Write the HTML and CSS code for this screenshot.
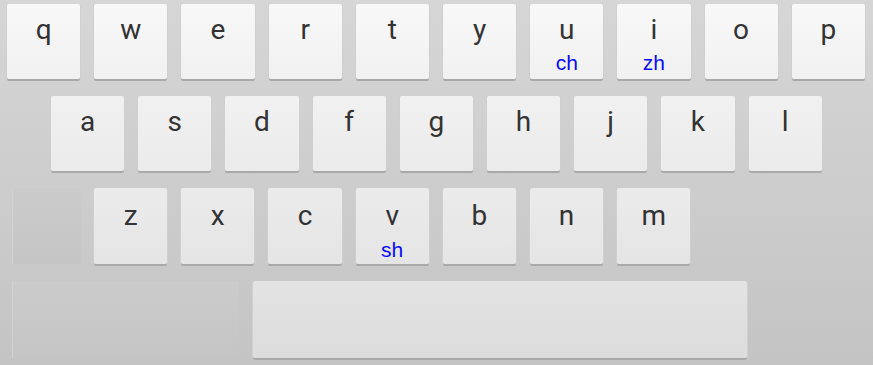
FILE: index.html
```html
<!DOCTYPE html>
<html lang="en">
<head>
    <meta charset="UTF-8">
    <title>Keyboard</title>
    <link rel="stylesheet" href="styles.css">
</head>
<body>
    <div class="keyboard">
        <div class="row row-1">
            <div class="key"><span class="main">q</span></div>
            <div class="key"><span class="main">w</span></div>
            <div class="key"><span class="main">e</span></div>
            <div class="key"><span class="main">r</span></div>
            <div class="key"><span class="main">t</span></div>
            <div class="key"><span class="main">y</span></div>
            <div class="key"><span class="main">u</span><span class="sub">ch</span></div>
            <div class="key"><span class="main">i</span><span class="sub">zh</span></div>
            <div class="key"><span class="main">o</span></div>
            <div class="key"><span class="main">p</span></div>
        </div>
        <div class="row row-2">
            <div class="key"><span class="main">a</span></div>
            <div class="key"><span class="main">s</span></div>
            <div class="key"><span class="main">d</span></div>
            <div class="key"><span class="main">f</span></div>
            <div class="key"><span class="main">g</span></div>
            <div class="key"><span class="main">h</span></div>
            <div class="key"><span class="main">j</span></div>
            <div class="key"><span class="main">k</span></div>
            <div class="key"><span class="main">l</span></div>
        </div>
        <div class="row row-3">
            <div class="ghost ghost-shift"></div>
            <div class="key"><span class="main">z</span></div>
            <div class="key"><span class="main">x</span></div>
            <div class="key"><span class="main">c</span></div>
            <div class="key"><span class="main">v</span><span class="sub">sh</span></div>
            <div class="key"><span class="main">b</span></div>
            <div class="key"><span class="main">n</span></div>
            <div class="key"><span class="main">m</span></div>
            <div class="ghost ghost-back"></div>
        </div>
        <div class="row row-4">
            <div class="ghost ghost-left"></div>
            <div class="key space"></div>
            <div class="ghost ghost-right"></div>
        </div>
    </div>
</body>
</html>
```

FILE: styles.css
```css
body {
    margin: 0;
    width: 873px;
    height: 365px;
    overflow: hidden;
    background: linear-gradient(#d6d6d6, #c4c4c4);
    font-family: Roboto, "Liberation Sans", sans-serif;
}
.keyboard {
    display: flex;
    flex-direction: column;
    gap: 17px;
    padding-top: 4px;
}
.row {
    display: flex;
    gap: 14px;
    height: 75px;
}
.row-1 {
    padding-left: 7px;
}
.row-2 {
    padding-left: 51px;
}
.row-3 {
    padding-left: 12px;
    height: 76px;
}
.row-4 {
    padding-left: 12px;
    height: 77px;
}
.key {
    width: 73.2px;
    flex: none;
    display: flex;
    flex-direction: column;
    align-items: center;
    border-radius: 2px;
    background: linear-gradient(#f8f8f8, #f1f1f1);
    box-shadow: 0 2px 0 #a9a9a9, 1px 1px 0 #cfcfcf, -1px 1px 0 #cfcfcf;
}
.row-2 .key {
    background: linear-gradient(#f1f1f1, #ebebeb);
}
.row-3 .key {
    background: linear-gradient(#ebebeb, #e5e5e5);
}
.main {
    font-size: 28px;
    line-height: 32px;
    padding-top: 10px;
    color: #333;
}
.row-3 .main {
    padding-top: 12px;
}
.sub {
    font-family: "Liberation Sans", Arial, sans-serif;
    font-size: 21px;
    line-height: 20px;
    margin-top: 7px;
    color: #0a0aff;
}
.row-3 .sub {
    margin-top: 8px;
}
.ghost {
    flex: none;
    background: linear-gradient(#cbcbcb, #c5c5c5);
}
.ghost-shift {
    width: 68px;
    border-left: 1px solid #d2d2d2;
    margin-right: -1px;
}
.ghost-back {
    width: 170px;
    background: transparent;
}
.ghost-left {
    width: 226px;
    border-left: 1px solid #d2d2d2;
}
.space {
    width: 494px;
    background: linear-gradient(#e3e3e3, #dcdcdc);
}
.ghost-right {
    width: 130px;
    background: transparent;
}
```
